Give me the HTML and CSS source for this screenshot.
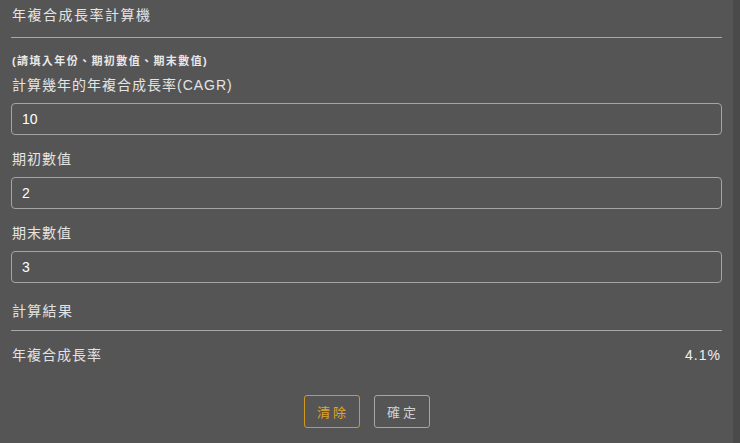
FILE: index.html
```html
<!DOCTYPE html>
<html lang="zh-Hant">
<head>
<meta charset="utf-8">
<title>年複合成長率計算機</title>
<link rel="stylesheet" href="styles.css">
</head>
<body>
<div class="page">
  <main class="calc">
    <header class="calc-head">
      <h1 class="calc-title">年複合成長率計算機</h1>
    </header>
    <p class="hint">(請填入年份、期初數值、期末數值)</p>
    <div class="field">
      <label class="field-label">計算幾年的年複合成長率(CAGR)</label>
      <input class="field-input" type="text" value="10">
    </div>
    <div class="field">
      <label class="field-label">期初數值</label>
      <input class="field-input" type="text" value="2">
    </div>
    <div class="field">
      <label class="field-label">期末數值</label>
      <input class="field-input" type="text" value="3">
    </div>
    <div class="result-head">計算結果</div>
    <div class="result-row">
      <span class="result-name">年複合成長率</span>
      <span class="result-value">4.1%</span>
    </div>
    <div class="actions">
      <button class="btn btn-clear">清除</button>
      <button class="btn btn-ok">確定</button>
    </div>
  </main>
  <div class="edge"></div>
</div>
</body>
</html>
```

FILE: styles.css
```css
html, body {
  margin: 0;
  padding: 0;
  height: 100%;
  background: #555555;
}
body {
  font-family: "Liberation Sans", "Noto Sans CJK TC", sans-serif;
  color: #e2e2e2;
  font-size: 14px;
  overflow: hidden;
}
.page {
  display: flex;
  height: 443px;
}
.calc {
  flex: 1;
  padding: 0 11px 0 11px;
}
.edge {
  width: 7px;
  background: #4a4a4a;
}
.calc-head {
  padding: 5px 1px 12px;
  border-bottom: 1px solid #a8a8a8;
}
.calc-title {
  margin: 0;
  font-size: 14px;
  font-weight: normal;
  line-height: 20px;
  letter-spacing: 1.5px;
  color: #e4e4e4;
}
.hint {
  margin: 16px 1px 0;
  font-size: 11px;
  line-height: 14px;
  font-weight: bold;
  letter-spacing: 1.4px;
  color: #e8e8e8;
}
.field {
  display: flex;
  flex-direction: column;
  margin-top: 14px;
}
.field:first-of-type {
  margin-top: 7px;
}
.field-label {
  margin: 0 1px 8px;
  line-height: 20px;
  letter-spacing: 1px;
  color: #e4e4e4;
}
.field-input {
  box-sizing: border-box;
  height: 32px;
  margin: 0;
  padding: 0 10px;
  border: 1px solid #a4a4a4;
  border-radius: 4px;
  background: #555555;
  color: #ffffff;
  font-family: "Liberation Sans", sans-serif;
  font-size: 14px;
}
.result-head {
  margin-top: 18px;
  padding: 0 1px 9px;
  line-height: 20px;
  letter-spacing: 1.3px;
  border-bottom: 1px solid #a8a8a8;
}
.result-row {
  display: flex;
  justify-content: space-between;
  margin-top: 14px;
  padding: 0 1px;
  line-height: 20px;
}
.result-name {
  letter-spacing: 1px;
}
.result-value {
  letter-spacing: 1px;
  color: #f0f0f0;
}
.actions {
  display: flex;
  justify-content: center;
  gap: 14px;
  margin-top: 30px;
}
.btn {
  box-sizing: border-box;
  width: 56px;
  height: 33px;
  border-radius: 3px;
  background: transparent;
  font-family: "Noto Sans CJK TC", sans-serif;
  font-size: 13px;
  letter-spacing: 3px;
  padding: 0 0 0 3px;
  cursor: pointer;
}
.btn-clear {
  border: 1px solid #d19a1c;
  color: #e0a624;
}
.btn-ok {
  border: 1px solid #a6a6a6;
  color: #d0d0d0;
}
```
